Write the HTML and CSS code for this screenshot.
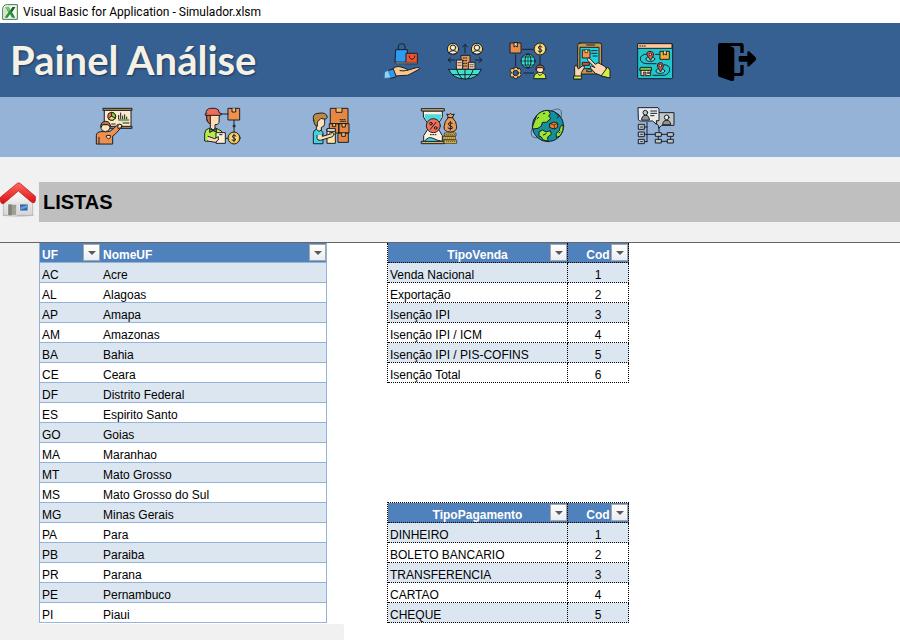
FILE: index.html
```html
<!DOCTYPE html>
<html lang="pt-BR">
<head>
<meta charset="utf-8">
<title>Visual Basic for Application - Simulador.xlsm</title>
<link rel="stylesheet" href="styles.css">
</head>
<body>
<div class="titlebar">
  <svg class="app-icon" viewBox="0 0 48 48" aria-hidden="true">
    <path d="M2 16Q2 2 16 2H46V46H2Z" fill="#f4faf3" stroke="#3c7a3f" stroke-width="3"/>
    <path d="M6 18Q6 6 18 6H24L10 42H6Z" fill="#cfe6cc"/>
    <path d="M10 9H20L26 18L32 9H40L30 24L40 41H30L24 31L17 41H8L19 25Z" fill="#2f8f3a"/>
    <path d="M10 9H20L25 17L20 24Z" fill="#7cc36a"/>
    <path d="M32 9H40L30 24L26 18Z" fill="#14602a"/>
  </svg>
  <span>Visual Basic for Application - Simulador.xlsm</span>
</div>

<header class="banner">
  <h1>Painel Análise</h1>
  <nav class="tools" aria-label="Principal">
    <button class="icon-btn" aria-label="Vendas">
      <svg viewBox="24 36 114 114">
        <g class="ln">
          <path d="M70 60V48Q70 41 80 41T90 48V60" fill="none"/>
          <path d="M63 59H97V97H61Z" fill="#2d9bf0"/>
          <path d="M94 70H127V101H94Z" fill="#f4512c"/>
          <path d="M94 97H127V101H62V97Z" fill="#f4d9c8" stroke-width="2"/>
          <path d="M103 78V82Q111 94 119 82V78" fill="none"/>
          <path d="M50 118L62 111Q70 108 78 111L90 115Q99 116 97 121L124 113Q134 111 134 117L104 133Q98 137 90 136L62 138Z" fill="#fbc98e"/>
          <path d="M75 122Q88 125 98 120" fill="none"/>
          <path d="M38 122L55 117L64 140L48 145Z" fill="#2d9bf0"/>
          <path d="M30 126L39 121L48 143L28 145Z" fill="#8ed5f4" stroke="#3675a8" stroke-width="2"/>
        </g>
      </svg>
    </button>
    <button class="icon-btn" aria-label="Clientes">
      <svg viewBox="213 36 114 114">
        <g class="ln">
          <circle cx="234" cy="57" r="17" fill="#f8d583"/><circle cx="234" cy="53" r="8" fill="#fff0d5"/><path d="M222 69Q223 62 234 62T246 69Q234 77 222 69Z" fill="#fff0d5"/>
          <circle cx="306" cy="57" r="17" fill="#f8d583"/><circle cx="306" cy="53" r="8" fill="#fff0d5"/><path d="M294 69Q295 62 306 62T318 69Q306 77 294 69Z" fill="#fff0d5"/>
          <path d="M270 69V44M263 51L270 43L277 51M239 90H220M227 83L219 90L227 97M301 90H320M313 83L321 90L313 97" fill="none"/>
          <path d="M258 117V76H285V117Z" fill="#e9965a"/>
          <path d="M244 117V90H263V117ZM280 117V97H300V117Z" fill="#f3c9a0"/>
          <path d="M265 84H279M265 92H279M265 100H278M265 108H278" stroke-dasharray="3 4"/>
          <path d="M249 98H260M249 106H260M285 104H297M285 110H297" stroke-width="2" stroke-dasharray="3 3"/>
          <path d="M221 118H319Q307 147 270 147T221 118Z" fill="#40e0d0"/>
          <path d="M245 119Q250 135 261 146M295 119Q290 135 279 146M270 118V147M232 134H308" fill="none"/>
        </g>
      </svg>
    </button>
    <button class="icon-btn" aria-label="Distribuição">
      <svg viewBox="27 36 114 114">
        <g class="ln">
          <path d="M68 58H99M47 74V107M71 129H101M120 79V103" fill="none"/>
          <path d="M31 39H63V69H31Z" fill="#ed8c45"/><path d="M42 39V51L47 48L52 51V39Z" fill="#ffd29b"/>
          <circle cx="120" cy="57" r="18" fill="#f8c84c"/><circle cx="120" cy="57" r="13" fill="#ffe391" stroke="none"/><path d="M126 51Q120 46 115 51Q114 56 120 57T126 63Q120 69 114 63M120 45V69" fill="none"/>
          <circle cx="84" cy="93" r="21" fill="#37dccb"/>
          <ellipse cx="84" cy="93" rx="9" ry="21" fill="none"/><path d="M63 93H105M84 72V114M68 81H100M68 105H100" fill="none" stroke-width="2"/>
          <path d="M43 112H52L53 117L60 116L64 123L60 128L64 134L59 141L53 140L51 146H43L41 140L34 142L30 134L35 128L30 122L35 115L41 117Z" fill="#ffc45c"/><circle cx="47" cy="129" r="8" fill="#37609a"/>
          <path d="M101 145Q102 127 120 127T138 145Z" fill="#caef31"/><path d="M113 124H127V130L120 137L113 130Z" fill="#ffd7a3"/><circle cx="120" cy="117" r="11" fill="#ffdfb0"/><path d="M108 119Q106 105 120 105T132 119L127 113H113Z" fill="#b96536"/>
        </g>
      </svg>
    </button>
    <button class="icon-btn" aria-label="Pedidos">
      <svg viewBox="216 36 114 114">
        <g class="ln">
          <path d="M240 39H299Q305 39 305 46V125Q305 132 298 132H240Q233 132 233 125V46Q233 39 240 39Z" fill="#c49a4b"/>
          <path d="M260 45H284" fill="none"/>
          <path d="M241 52H297V116H241Z" fill="#1fd3dd"/>
          <path d="M248 60H270V84H248Z" fill="#f4944a"/><path d="M255 60V68H263V60" fill="#ffd08c" stroke-width="2"/>
          <path d="M275 62H291M275 70H291M279 78H291" fill="none"/>
          <path d="M248 97H268V106H248Z" fill="#f04a35"/>
          <path d="M224 146V112Q223 104 230 107L235 117L247 108Q255 105 253 113L244 128V146Z" fill="#ffd7af"/>
          <path d="M309 139L286 130L273 116Q268 108 275 108L285 113L264 92Q259 84 268 84L286 103L294 98L316 110L323 126Z" fill="#ffd7af"/>
          <path d="M304 137L323 111L330 121V143Z" fill="#d7ed40"/>
          <path d="M222 138H245V147H222Z" fill="#d7ed40"/><path d="M261 120H275V125H261Z" fill="#fff2d0"/>
        </g>
      </svg>
    </button>
    <button class="icon-btn" aria-label="Rotas">
      <svg viewBox="15 36 114 114">
        <g class="ln">
          <path d="M25 41H125Q128 41 128 45V142Q128 146 124 146H27Q23 146 23 142V43Z" fill="#20c7cc"/>
          <path d="M25 41H126V55H23V43Z" fill="#ffc99c"/><path d="M29 48H46" stroke-dasharray="3 4"/>
          <path d="M51 72Q31 74 31 86T48 101H78M103 104Q120 106 119 119T103 136H69M77 73H88" fill="none"/>
          <ellipse cx="61" cy="87" rx="13" ry="7" fill="#57e1df"/><path d="M61 90L51 75Q49 64 60 64T71 75Z" fill="#f55337"/><circle cx="61" cy="73" r="4" fill="#ffe6d4"/>
          <ellipse cx="91" cy="123" rx="13" ry="7" fill="#57e1df"/><path d="M91 125L82 109Q81 98 91 98T100 109Z" fill="#f55337"/><circle cx="91" cy="107" r="4" fill="#ffe6d4"/>
          <path d="M91 64H118V88H91Z" fill="#f5ad28"/><path d="M100 64V75L104 72L109 75V64" fill="#ffe08d"/>
          <path d="M34 119H62V137H34Z" fill="#fff0c1"/><path d="M32 112H64L65 121H30Z" fill="#7ec34b"/><path d="M40 137V126H48V137M53 126H59V131H53Z" fill="#b37133" stroke-width="2"/>
        </g>
      </svg>
    </button>
    <button class="icon-btn exit-btn" aria-label="Sair">
      <svg viewBox="258 36 120 120">
        <path d="M270 39H334Q341 39 341 46V69H331V51Q331 48 327 48H300L309 52Q313 54 313 60V129H327Q331 129 331 125V105H341V130Q341 138 334 138H313V146Q313 155 304 153L269 141Q264 139 264 134V45Q264 39 270 39Z"/>
        <path d="M329 78H352V68Q352 60 359 65L377 82Q380 87 377 91L359 108Q352 113 352 104V95H329Q326 95 326 92V81Q326 78 329 78Z"/>
      </svg>
    </button>
  </nav>
</header>

<nav class="subnav" aria-label="Cadastros">
  <div class="subnav-items">
    <button class="icon-btn" aria-label="Apresentação">
      <svg viewBox="30 30 114 114">
        <g class="ln">
          <path d="M59 39H138V91H59Z" fill="#ffe8cb"/><path d="M55 34H141V40H55ZM55 88H141V94H55Z" fill="#b9964c"/>
          <circle cx="80" cy="58" r="12" fill="#ef7540"/><path d="M80 58V46A12 12 0 0 1 91 63Z" fill="#86db36"/><path d="M80 58L91 63A12 12 0 0 1 71 66Z" fill="#ffe146"/>
          <path d="M101 66V55M107 66V48M113 66V57M119 66V53M125 66V60" fill="none"/><path d="M102 67H131V71H102Z" fill="#70df2b" stroke-width="1"/>
          <path d="M80 81H91M114 78H132" fill="none"/>
          <path d="M34 140V116Q35 104 48 104H67Q74 105 82 98L99 82Q108 79 111 89L91 111L83 117V140Z" fill="#ef914c"/>
          <path d="M99 85Q104 78 111 84L108 93L100 94Z" fill="#ffe0af"/>
          <path d="M48 84V94Q51 104 61 104T75 93V84Z" fill="#ffe5b7"/><path d="M48 90Q46 74 61 73T76 90L69 83H54Z" fill="#cf7040"/>
          <path d="M42 140V121M65 116L76 115V122L70 126L65 121Z" fill="#ffe5b7"/>
        </g>
      </svg>
    </button>
    <button class="icon-btn" aria-label="Fornecedores">
      <svg viewBox="354 30 114 114">
        <g class="ln">
          <path d="M409 51H431M447 70V104M420 124H430" fill="none"/><circle cx="447" cy="87" r="3" fill="#a56036"/>
          <path d="M430 34H464V69H430Z" fill="#ee914b"/><path d="M441 34V45H452V34" fill="#ffc070"/>
          <circle cx="447" cy="123" r="18" fill="#f2ba42"/><circle cx="447" cy="123" r="12" fill="#ffd97c" stroke="none"/><path d="M453 117Q447 112 442 117Q441 121 447 123T452 129Q447 133 441 129M447 112V134" fill="none"/>
          <path d="M359 130V111Q359 97 370 95L378 92H388L400 97Q411 99 413 112V131H369Q359 137 359 130Z" fill="#b9ec4b"/>
          <path d="M369 53H403L402 77Q398 85 390 83V94L384 99L376 92V80Q363 76 365 58Z" fill="#ffdbb0"/>
          <path d="M365 54H376V80Q364 78 365 54Z" fill="#d46d39"/>
          <path d="M363 50Q362 35 377 34H391Q403 36 403 48L410 50Q409 55 404 55H361Q358 52 363 50Z" fill="#f26b58"/>
          <path d="M375 95L384 101L394 95V105L384 101L375 106Z" fill="#5c9b30"/>
          <path d="M394 107H421V139H394Z" fill="#ffedcf"/><path d="M404 113H411M369 118L389 125L400 119V129L391 136L367 132" fill="#ffdbb0"/>
        </g>
      </svg>
    </button>
    <button class="icon-btn" aria-label="Estoque">
      <svg viewBox="36 30 114 114">
        <g class="ln">
          <path d="M92 34H144V80H92ZM89 80H117V108H89ZM117 80H147V108H117ZM115 108H145V136H115Z" fill="#e8873f"/>
          <path d="M108 34V46H126V34M126 81V90H136V81M98 81V89H107V81M125 109V118H136V109" fill="#ffb969"/><path d="M120 68H137M122 73H137" stroke-dasharray="3 3"/>
          <path d="M40 139V109Q40 99 50 97H61L69 107V139Z" fill="#3ed6e4"/>
          <path d="M45 69L50 62H74V80Q73 91 64 91V99L57 103L49 97V88Q43 82 45 69Z" fill="#ffe1b7"/>
          <path d="M41 70Q35 50 54 49Q80 44 82 61Q79 70 63 64L52 75V88Q42 85 41 70Z" fill="#bd8a43"/>
          <path d="M82 96H106V139H82Z" fill="#ffe7a3"/><path d="M82 95H106V103H82Z" fill="#fff4cc"/>
          <path d="M51 115V124Q52 131 61 130L98 119Q104 112 98 109L67 118V113" fill="#ffdcb2"/><path d="M88 108L99 106L103 112" fill="#ffdcb2"/>
        </g>
      </svg>
    </button>
    <button class="icon-btn" aria-label="Financeiro">
      <svg viewBox="360 30 114 114">
        <g class="ln">
          <path d="M371 42H427V61L412 84V91L427 116V134H371V116L387 91V84L371 61Z" fill="#fff0df"/>
          <path d="M374 52H424V62L410 79H389L374 62Z" fill="#50dae0" stroke="none"/><path d="M373 133Q385 117 399 124T425 133Z" fill="#45d8dc"/>
          <path d="M365 35H433V42H365ZM365 133H433V140H365Z" fill="#d7b063"/>
          <circle cx="400" cy="86" r="21" fill="#f47158"/><path d="M408 76L391 97" fill="none"/><circle cx="393" cy="80" r="4" fill="none"/><circle cx="407" cy="93" r="4" fill="none"/><path d="M391 113H408" stroke-dasharray="3 4"/>
          <path d="M445 61L440 51L447 53L451 49L456 53L463 51L457 62Q470 73 470 89Q470 105 451 105T432 90Q433 72 445 61Z" fill="#ed9a54"/><path d="M443 62H459M457 79Q450 75 445 79Q443 84 450 86Q459 88 457 94Q450 98 444 93M451 73V99" fill="none"/>
          <path d="M434 108H468V117H434ZM430 118H466V128H430ZM433 129H470V139H433Z" fill="#ffc93d" stroke-width="2"/><path d="M438 113H465M435 123H462M439 134H466" stroke-width="2" stroke-dasharray="2 4"/>
        </g>
      </svg>
    </button>
    <button class="icon-btn" aria-label="Exportação">
      <svg viewBox="27 30 114 114">
        <g class="ln">
          <path d="M93 42Q118 29 124 43V60M35 98Q27 123 51 123" fill="none" stroke="#52667c"/>
          <circle cx="84" cy="87" r="47" fill="#168f9d"/>
          <path d="M39 85L50 56Q63 40 84 40L91 50L86 58L93 64L79 76L67 76L64 87L54 94L38 96Z" fill="#9be431"/>
          <path d="M58 104L68 99L78 105L91 101L94 112L83 120L84 132L70 129L63 119L58 118ZM109 109L118 101L121 88L130 84Q131 101 121 116L110 121Z" fill="#9be431"/>
          <path d="M107 49L117 55L112 63M51 65L56 61M70 50L74 49M70 114L78 110M117 108L120 105" fill="none"/>
          <path d="M90 80L102 75L113 79V91L103 96L90 92Z" fill="#f27e29"/><path d="M90 80L103 84L113 79M103 84V96" fill="none" stroke-width="2"/>
        </g>
      </svg>
    </button>
    <button class="icon-btn" aria-label="Listas">
      <svg viewBox="351 30 114 114">
        <g class="ln">
          <path d="M411 47H462V85H425L416 94V86L411 82Z" fill="#c6c6c6"/>
          <path d="M355 32H414L417 36V71H409V82L398 72H359L356 69Z" fill="#ededed"/>
          <path d="M365 68Q365 56 376 55T388 68ZM428 82Q429 70 440 70T452 82Z" fill="#949494"/><circle cx="376" cy="47" r="7" fill="#c4c4c4"/><circle cx="440" cy="61" r="7" fill="#eee"/>
          <path d="M392 42H410M392 49H410M392 56H402" fill="none"/>
          <path d="M381 76V134M372 90H381M372 112H462M373 134H381M417 92V106M415 113V128M452 113V128M424 133H444" fill="none"/>
          <path d="M356 82H373V97H356ZM356 105H373V119H356ZM356 127H373V140H356ZM407 107H424V118H407ZM443 107H460V118H443ZM407 127H424V138H407ZM443 127H460V138H443Z" fill="#c4c4c4"/>
          <path d="M362 90H367M362 112H367M362 134H367" fill="none"/>
        </g>
      </svg>
    </button>
  </div>
</nav>

<div class="heading-row">
  <a class="home" href="#" aria-label="Início">
    <svg viewBox="0 66 108 108">
      <defs>
        <linearGradient id="roof" x1="0" y1="0" x2="0" y2="1"><stop offset="0" stop-color="#ff6a60"/><stop offset="1" stop-color="#d90d12"/></linearGradient>
        <linearGradient id="wall" x1="0" y1="0" x2="0" y2="1"><stop offset="0" stop-color="#ffffff"/><stop offset="1" stop-color="#d5d5d5"/></linearGradient>
      </defs>
      <ellipse cx="55" cy="166" rx="48" ry="4" fill="#c6c6c6"/>
      <path d="M10 120L54 84L98 120V166H10Z" fill="url(#wall)" stroke="#a8a8a8" stroke-width="2"/>
      <path d="M52 70Q56 67 60 70L106 109Q108 120 104 127Q99 130 94 126L55 93L12 130Q7 133 3 128Q-2 118 2 111Z" fill="url(#roof)" stroke="#b80f12" stroke-width="2"/>
      <path d="M24 133H50V166H24Z" fill="#9b9d99" stroke="#efefef" stroke-width="2"/><path d="M25 133H35V166H25Z" fill="#7d817b"/><circle cx="44" cy="149" r="2" fill="#e7c53d"/>
      <path d="M57 130H86V155H57Z" fill="#f6f6f6" stroke="#bbb"/><path d="M60 133H83V152H60Z" fill="#3366ae"/><path d="M61 142L83 134V142L61 150Z" fill="#6b97cd"/>
    </svg>
  </a>
  <h2>LISTAS</h2>
</div>

<main class="sheet">
  <div class="gutter"></div>
  <table class="list states">
    <colgroup><col class="col-uf"><col></colgroup>
    <thead>
      <tr>
        <th scope="col">UF<button class="filter" aria-label="Filtrar UF"></button></th>
        <th scope="col">NomeUF<button class="filter" aria-label="Filtrar NomeUF"></button></th>
      </tr>
    </thead>
    <tbody>
      <tr><td>AC</td><td>Acre</td></tr>
      <tr><td>AL</td><td>Alagoas</td></tr>
      <tr><td>AP</td><td>Amapa</td></tr>
      <tr><td>AM</td><td>Amazonas</td></tr>
      <tr><td>BA</td><td>Bahia</td></tr>
      <tr><td>CE</td><td>Ceara</td></tr>
      <tr><td>DF</td><td>Distrito Federal</td></tr>
      <tr><td>ES</td><td>Espirito Santo</td></tr>
      <tr><td>GO</td><td>Goias</td></tr>
      <tr><td>MA</td><td>Maranhao</td></tr>
      <tr><td>MT</td><td>Mato Grosso</td></tr>
      <tr><td>MS</td><td>Mato Grosso do Sul</td></tr>
      <tr><td>MG</td><td>Minas Gerais</td></tr>
      <tr><td>PA</td><td>Para</td></tr>
      <tr><td>PB</td><td>Paraiba</td></tr>
      <tr><td>PR</td><td>Parana</td></tr>
      <tr><td>PE</td><td>Pernambuco</td></tr>
      <tr><td>PI</td><td>Piaui</td></tr>
    </tbody>
  </table>
  <div class="codes">
    <table class="list dotted">
      <colgroup><col><col class="col-cod"></colgroup>
      <thead>
        <tr>
          <th scope="col">TipoVenda<button class="filter" aria-label="Filtrar TipoVenda"></button></th>
          <th scope="col">Cod<button class="filter" aria-label="Filtrar Cod"></button></th>
        </tr>
      </thead>
      <tbody>
        <tr><td>Venda Nacional</td><td>1</td></tr>
        <tr><td>Exportação</td><td>2</td></tr>
        <tr><td>Isenção IPI</td><td>3</td></tr>
        <tr><td>Isenção IPI / ICM</td><td>4</td></tr>
        <tr><td>Isenção IPI / PIS-COFINS</td><td>5</td></tr>
        <tr><td>Isenção Total</td><td>6</td></tr>
      </tbody>
    </table>
    <table class="list dotted topped">
      <colgroup><col><col class="col-cod"></colgroup>
      <thead>
        <tr>
          <th scope="col">TipoPagamento<button class="filter" aria-label="Filtrar TipoPagamento"></button></th>
          <th scope="col">Cod<button class="filter" aria-label="Filtrar Cod"></button></th>
        </tr>
      </thead>
      <tbody>
        <tr><td>DINHEIRO</td><td>1</td></tr>
        <tr><td>BOLETO BANCARIO</td><td>2</td></tr>
        <tr><td>TRANSFERENCIA</td><td>3</td></tr>
        <tr><td>CARTAO</td><td>4</td></tr>
        <tr><td>CHEQUE</td><td>5</td></tr>
      </tbody>
    </table>
  </div>
</main>
<footer class="tabstrip"></footer>
</body>
</html>
```
FILE: styles.css
```css
* { box-sizing: border-box; }

body {
  margin: 0;
  min-height: 100vh;
  display: flex;
  flex-direction: column;
  background: #fff;
  color: #000;
  font: 12px/14px "Liberation Sans", Arial, sans-serif;
}

button { font: inherit; cursor: pointer; }
svg { display: block; width: 100%; height: 100%; overflow: visible; }

.titlebar {
  display: flex;
  align-items: center;
  gap: 5px;
  height: 23px;
  padding-left: 2px;
  font: 12px/16px Roboto, "Segoe UI", sans-serif;
}
.app-icon { width: 16px; height: 16px; }

.banner {
  display: flex;
  align-items: center;
  height: 74px;
  background: #376092;
}
.banner h1 {
  flex: 0 0 383px;
  margin: 0;
  padding-left: 10px;
  color: #f5f1e4;
  font: 700 40px/48px Lato, Calibri, sans-serif;
  text-shadow: 1px 1px 2px #17375e, 0 0 1px #1f5fa8;
}

.tools {
  display: flex;
  gap: 25px;
  padding-top: 4px;
}
.icon-btn {
  flex: none;
  width: 38px;
  height: 38px;
  padding: 0;
  border: 0;
  background: none;
}
.exit-btn { width: 40px; height: 40px; margin-left: 18px; }

.ln {
  stroke: #17202b;
  stroke-width: 3;
  stroke-linejoin: round;
  stroke-linecap: round;
}

.subnav {
  height: 60px;
  padding: 10px 95px;
  background: #95b3d7;
}
.subnav-items {
  display: flex;
  justify-content: space-between;
  max-width: 580px;
}

.heading-row {
  display: flex;
  height: 86px;
  padding: 25px 0 20px;
  gap: 3px;
  background: #f1f1f1;
  border-bottom: 1px solid #666;
}
.home { width: 36px; height: 36px; }
.heading-row h2 {
  flex: 1;
  height: 40px;
  margin: 0;
  padding-left: 4px;
  background: #bfbfbf;
  font-size: 20px;
  line-height: 40px;
}

.sheet {
  flex: 1;
  display: grid;
  grid-template-columns: 39px 288px 242px;
  column-gap: 0;
  align-items: start;
}
.gutter { align-self: stretch; background: #f1f1f1; }

.list {
  width: 100%;
  table-layout: fixed;
  border-collapse: separate;
  border-spacing: 0;
}
.list th,
.list td {
  height: 20px;
  padding: 5px 2px 0;
  text-align: left;
  white-space: nowrap;
}
.list th {
  position: relative;
  background: #4f81bd;
  color: #fff;
}
.list tbody tr:nth-child(odd) { background: #dce6f1; }

.states { border: solid #95b3d7; border-width: 0 1px; }
.states th, .states td { border-bottom: 1px solid #95b3d7; }
.states th + th, .states td + td { padding-left: 3px; }
.col-uf { width: 60px; }

.codes {
  display: flex;
  flex-direction: column;
  gap: 119px;
  margin-left: 60px;
  width: 242px;
}
.dotted { border-left: 1px dotted #000; }
.dotted th, .dotted td { border: dotted #000; border-width: 0 1px 1px 0; }
.dotted th, .dotted td + td { text-align: center; }
.topped { border-top: 1px dotted #000; }
.col-cod { width: 61px; }

.filter {
  position: absolute;
  right: 0;
  top: 1px;
  display: grid;
  place-items: center;
  width: 17px;
  height: 17px;
  padding: 0;
  border: 1px solid #a6a6a6;
  background: linear-gradient(#fff, #e9edf2);
}
.filter::after {
  content: "";
  border: solid transparent;
  border-width: 4px 4px 0;
  border-top-color: #595959;
}

.tabstrip {
  width: 344px;
  height: 16px;
  background: #f1f1f1;
  border-top-right-radius: 2px;
}
```
